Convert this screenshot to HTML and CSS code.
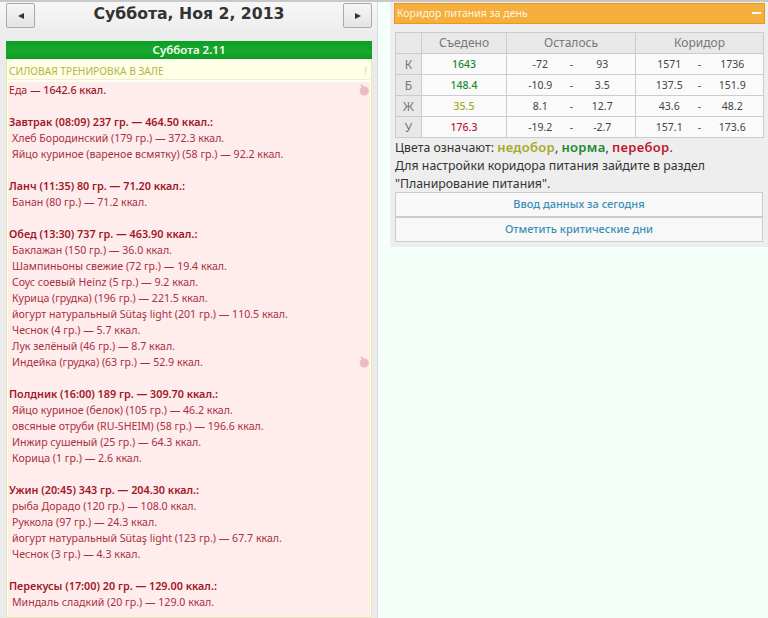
FILE: index.html
```html
<!DOCTYPE html>
<html lang="ru">
<head>
<meta charset="utf-8">
<title>Суббота, Ноя 2, 2013</title>
<link rel="stylesheet" href="styles.css">
</head>
<body>
<div class="page">
  <main class="left">
    <header class="datebar">
      <button class="nav"><span class="tri tri-l"></span></button>
      <h1>Суббота, Ноя 2, 2013</h1>
      <button class="nav"><span class="tri tri-r"></span></button>
    </header>
    <div class="day">Суббота 2.11</div>
    <div class="daybox">
      <div class="training"><span>СИЛОВАЯ ТРЕНИРОВКА В ЗАЛЕ</span><b class="bang">!</b></div>
      <div class="food">
        <svg class="apple a1" viewBox="0 0 10 12"><circle cx="5.2" cy="7" r="4.6"/><path d="M1 .8 2.2.2 6 3 4.2 4.2z"/></svg>
        <svg class="apple a2" viewBox="0 0 10 12"><circle cx="5.2" cy="7" r="4.6"/><path d="M1 .8 2.2.2 6 3 4.2 4.2z"/></svg>
        <p class="total">Еда — <b>1642.6 ккал.</b></p>
        <section><h2>Завтрак (08:09) 237 гр. — 464.50 ккал.:</h2>
          <p>Хлеб Бородинский (179 гр.) — 372.3 ккал.</p>
          <p>Яйцо куриное (вареное всмятку) (58 гр.) — 92.2 ккал.</p></section>
        <section><h2>Ланч (11:35) 80 гр. — 71.20 ккал.:</h2>
          <p>Банан (80 гр.) — 71.2 ккал.</p></section>
        <section><h2>Обед (13:30) 737 гр. — 463.90 ккал.:</h2>
          <p>Баклажан (150 гр.) — 36.0 ккал.</p>
          <p>Шампиньоны свежие (72 гр.) — 19.4 ккал.</p>
          <p>Соус соевый Heinz (5 гр.) — 9.2 ккал.</p>
          <p>Курица (грудка) (196 гр.) — 221.5 ккал.</p>
          <p>йогурт натуральный Sütaş light (201 гр.) — 110.5 ккал.</p>
          <p>Чеснок (4 гр.) — 5.7 ккал.</p>
          <p>Лук зелёный (46 гр.) — 8.7 ккал.</p>
          <p>Индейка (грудка) (63 гр.) — 52.9 ккал.</p></section>
        <section><h2>Полдник (16:00) 189 гр. — 309.70 ккал.:</h2>
          <p>Яйцо куриное (белок) (105 гр.) — 46.2 ккал.</p>
          <p>овсяные отруби (RU-SHEIM) (58 гр.) — 196.6 ккал.</p>
          <p>Инжир сушеный (25 гр.) — 64.3 ккал.</p>
          <p>Корица (1 гр.) — 2.6 ккал.</p></section>
        <section><h2>Ужин (20:45) 343 гр. — 204.30 ккал.:</h2>
          <p>рыба Дорадо (120 гр.) — 108.0 ккал.</p>
          <p>Руккола (97 гр.) — 24.3 ккал.</p>
          <p>йогурт натуральный Sütaş light (123 гр.) — 67.7 ккал.</p>
          <p>Чеснок (3 гр.) — 4.3 ккал.</p></section>
        <section><h2>Перекусы (17:00) 20 гр. — 129.00 ккал.:</h2>
          <p>Миндаль сладкий (20 гр.) — 129.0 ккал.</p></section>
      </div>
    </div>
  </main>
  <aside class="right">
    <div class="panel">
      <div class="panel-head"><span>Коридор питания за день</span><i class="minus"></i></div>
      <table>
        <colgroup><col class="w26"><col class="w85"><col class="w49"><col class="w32"><col class="w48"><col class="w49"><col class="w30"><col class="w49"></colgroup>
        <thead>
          <tr><th></th><th>Съедено</th><th colspan="3">Осталось</th><th colspan="3">Коридор</th></tr>
        </thead>
        <tbody>
          <tr><th>К</th><td class="good">1643</td><td class="a">-72</td><td>-</td><td class="b">93</td><td class="a">1571</td><td>-</td><td class="c">1736</td></tr>
          <tr><th>Б</th><td class="good">148.4</td><td class="a">-10.9</td><td>-</td><td class="b">3.5</td><td class="a">137.5</td><td>-</td><td class="c">151.9</td></tr>
          <tr><th>Ж</th><td class="low">35.5</td><td class="a">8.1</td><td>-</td><td class="b">12.7</td><td class="a">43.6</td><td>-</td><td class="c">48.2</td></tr>
          <tr><th>У</th><td class="over">176.3</td><td class="a">-19.2</td><td>-</td><td class="b">-2.7</td><td class="a">157.1</td><td>-</td><td class="c">173.6</td></tr>
        </tbody>
      </table>
      <div class="note">
        <p>Цвета означают: <b class="low">недобор</b>, <b class="good">норма</b>, <b class="over">перебор</b>.</p>
        <p>Для настройки коридора питания зайдите в раздел</p>
        <p>"Планирование питания".</p>
      </div>
      <a class="btn" href="#">Ввод данных за сегодня</a>
      <a class="btn" href="#">Отметить критические дни</a>
    </div>
  </aside>
</div>
</body>
</html>
```
FILE: styles.css
```css
* { box-sizing: border-box; }
html, body { margin: 0; padding: 0; height: 100%; overflow: hidden; }
body { background: #f3fff8; font-family: "Noto Sans", sans-serif; }
.page { display: flex; height: 618px; border-top: 2px solid #c8c8c8; }
.left { display: flex; flex-direction: column; width: 378px; height: 616px; background: linear-gradient(#f7f7f7 0, #ebebeb 36px, #ebebeb 100%); padding: 0 5px 0 6px; border-right: 1px solid #d8dce4; flex: none; }
.datebar { display: flex; justify-content: space-between; height: 39px; margin-bottom: 0; flex: none; padding-top: 1px; }
.datebar h1 { margin: 0; font-family: "DejaVu Sans", sans-serif; font-size: 15.7px; line-height: 22px; font-weight: bold; color: #333; }
.nav { width: 29px; height: 25px; margin-top: 0; padding: 0; background: linear-gradient(#f6f6f6, #e4e4e4); border: 1px solid #aaa; border-radius: 2px; display: flex; align-items: center; justify-content: center; }
.tri { width: 0; height: 0; border-top: 3.5px solid transparent; border-bottom: 3.5px solid transparent; }
.tri-l { border-right: 6px solid #333; }
.tri-r { border-left: 6px solid #333; }
.day { flex: none; height: 18px; background: linear-gradient(#0c9e22, #18a82e 60%, #0d9a20); color: #f2fff0; font-size: 11.5px; font-weight: 600; line-height: 18px; text-align: center; }
.daybox { flex: 1; min-height: 0; overflow: hidden; background: #fffff0; border: 1px solid #e8e8a8; border-top: 0; padding: 3px 1px 0 1px; }
.training { display: flex; justify-content: space-between; height: 18px; padding: 0 3px 0 1px; font-size: 10.2px; line-height: 18px; color: #b4b444; background: #ffffe8; border-bottom: 1px solid #eeeecc; }
.bang { color: #e4e4c4; font-size: 11px; }
.food { position: relative; margin-top: 2px; background: #ffecec; padding: 0 1px; color: #a83040; font-size: 10.6px; line-height: 16px; height: 560px; }
.food p { margin: 0 0 0 3px; white-space: nowrap; }
.food .total { margin: 0; color: #a01828; }
.food b { color: #a01828; font-weight: 500; }
.food section { margin-top: 16px; }
.food h2 { margin: 0; font-size: 10.8px; line-height: 16px; font-weight: 600; color: #a01828; white-space: nowrap; }
.apple { position: absolute; right: 1px; width: 10px; height: 12px; fill: #ecbcc0; }
.a1 { top: 2px; }
.a2 { top: 274px; }
.right { width: 378px; margin-left: 12px; flex: none; }
.panel { background: #eeeeee; padding: 1px 3px 3px 4px; height: 245px; }
.panel-head { height: 21px; display: flex; justify-content: space-between; align-items: center; padding: 0 2px 2px; background: #f6ae3c; border: 1px solid #e89a20; color: #fdf5e0; font-size: 10.5px; }
.minus { width: 9px; height: 2px; background: #fff; margin-right: 1px; }
table { border-collapse: collapse; table-layout: fixed; width: 368px; margin: 8px 0 0 1px; font-size: 10.5px; color: #444; }
.w26 { width: 26px; }
.w85 { width: 85px; }
.w49 { width: 49px; }
.w32 { width: 32px; }
.w48 { width: 48px; }
.w30 { width: 30px; }
tr { height: 21px; }
table th, table td { padding: 0; text-align: center; font-weight: normal; }
thead th { background: #e8e8e8; border: 1px solid #ccc; color: #777; font-size: 12px; padding-bottom: 2px; }
tbody th { background: #e8e8e8; border: 1px solid #ccc; color: #777; font-size: 12px; }
tbody td { background: #fafafa; border-top: 1px solid #ccc; border-bottom: 1px solid #ccc; }
tbody td:nth-child(2), tbody td:nth-child(5), tbody td:nth-child(8) { border-right: 1px solid #ccc; }
td.a { padding-left: 18px; }
td.b { padding-right: 18px; }
td.c { padding-right: 13px; }
.good { color: #1a8a30; font-weight: 500; }
.low { color: #a8a828; font-weight: 500; }
.over { color: #c01830; font-weight: 500; }
.note { margin: 1px 0 -1px 1px; font-size: 12.3px; line-height: 18px; color: #333; }
.note p { margin: 0; white-space: nowrap; }
.note b { font-weight: 600; font-size: 13px; line-height: 1; letter-spacing: 0.3px; }
.btn { display: block; width: 368px; margin-left: 1px; height: 25px; line-height: 22px; text-align: center; background: #f8f8f8; border: 1px solid #ccc; color: #3a8fb8; font-size: 11px; font-weight: 500; text-decoration: none; }
```
